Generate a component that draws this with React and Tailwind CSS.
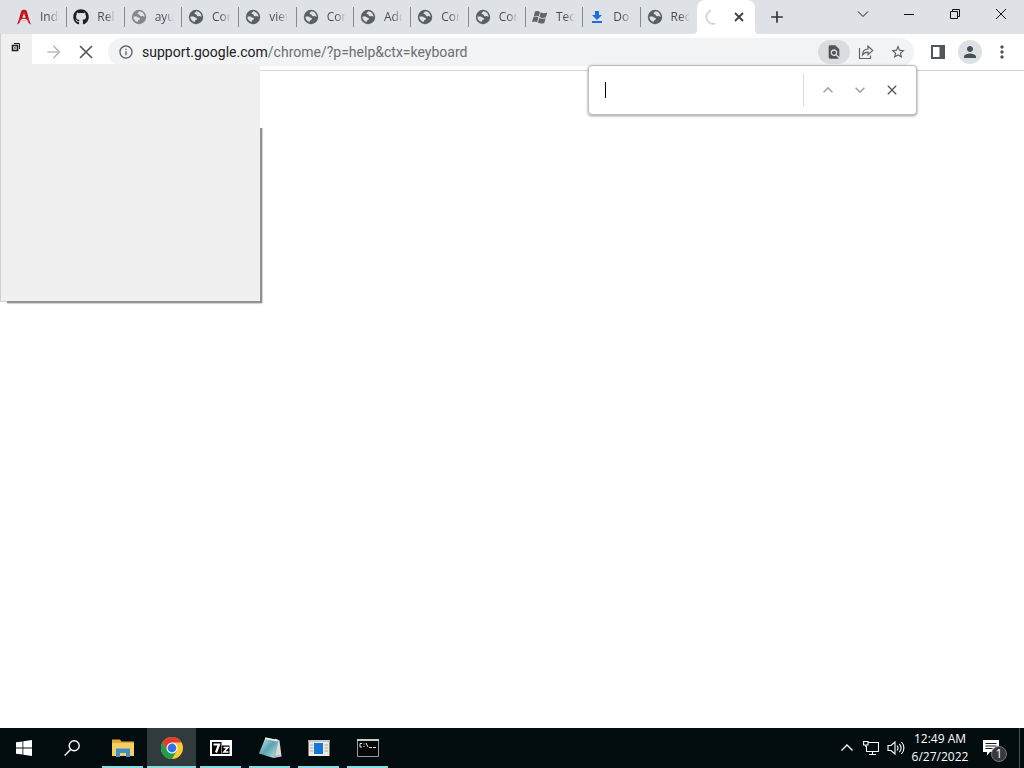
import React from 'react';
import {
  MdArrowForward, MdClose, MdOutlineInfo, MdFindInPage, MdStarBorder,
  MdPerson, MdMoreVert, MdKeyboardArrowUp, MdKeyboardArrowDown, MdAdd,
} from 'react-icons/md';
import { FaGithub } from 'react-icons/fa';

const Globe = ({ color = '#5a5f63' }) => (
  <svg viewBox="0 0 16 16" className="size-4" aria-hidden="true">
    <circle cx="8" cy="8" r="7.2" fill={color} />
    <path d="M2.300 7.800C3.800 7.600 5.600 7.400 6.800 8.200c.8.6 1.500.5 2 1 .6.7-.1 1.500-1 1.800-.9.300-.7 1.300-1.300 1.900C4 12.400 2.400 10.400 2.300 7.800Z" fill="#dee1e6" />
    <path d="M8.200 2.300c0 .9-1.700 1-1.700 2 0 .9 1.100.7 1.800 1.200.7.6.4 1.500 1.400 1.700 1 .2 1.300-.4 2.200-.2.700.2.800.9 1.600.9C13.400 4.900 11.400 2.400 8.200 2.300Z" fill="#dee1e6" />
  </svg>
);

const RedMark = () => (
  <svg viewBox="0 0 16 16" className="size-4" aria-hidden="true">
    <path d="M1 15.500C3.200 11 4 5 5.500 1.500 6.500.4 9.500.4 10.500 1.500 12 5 12.800 11 15 15.500 12.800 14.500 11.600 12.500 10.800 11.200H5.200C4.400 12.500 3.200 14.500 1 15.500Z" fill="#c4161c" />
    <path d="M8 4 6.300 8.800h3.400Z" fill="#dee1e6" />
    <path d="M3.300 12.400C5.500 8.800 10.500 8.800 12.700 12.400 10 10.400 6 10.400 3.300 12.400Z" fill="#fff" />
  </svg>
);

const WindowsFlag = () => (
  <svg viewBox="0 0 16 16" className="size-4" fill="#606368" aria-hidden="true">
    <path d="M3 2.600C4.800 1.700 6.400 2 8 2.900L6.700 7.600C5 6.700 3.500 6.500 1.700 7.400ZM8.700 3.300c1.800 1 3.800 1.200 6.600.2L13.900 8.300c-2.200.9-4.200.8-6.400-.3ZM1.400 8.200c1.700-.8 3.300-.8 5 .2L5.100 13.300C3.500 12.400 2 12.300 0 13.100ZM7.200 8.900c1.900 1 4.200 1.100 6.400.3L12.200 14c-2.200.9-4.400.6-6.300-.3Z" />
  </svg>
);

const Download = () => (
  <svg viewBox="0 0 16 16" className="size-4" fill="#1a6fe0" aria-hidden="true">
    <path d="M6 2h4v4h3l-5 5-5-5h3ZM3 12h10v2H3Z" />
  </svg>
);

const tabs = [
  ['Ind', <RedMark />],
  ['Rele', <FaGithub className="size-4 text-[#1c1f23]" />],
  ['ayu', <Globe color="#83878b" />],
  ['Con', <Globe />],
  ['view', <Globe />],
  ['Con', <Globe />],
  ['Add', <Globe />],
  ['Con', <Globe />],
  ['Con', <Globe />],
  ['Tec', <WindowsFlag />],
  ['Do', <Download />],
  ['Rec', <Globe />],
];

function TabStrip() {
  return (
    <div className="flex h-[34px] bg-[#dee1e6] pl-[9px]">
      <div className="flex min-w-0 max-w-[688px] flex-1" role="tablist">
        {tabs.map(([title, icon], i) => (
          <button key={i} role="tab" aria-selected="false" className="relative flex min-w-0 flex-1 items-center gap-2 pl-[7px]">
            <span className="shrink-0">{icon}</span>
            <span className="w-[18px] overflow-hidden bg-gradient-to-r from-[#45494d] from-50% to-[#45494d]/10 bg-clip-text text-left text-xs text-transparent">
              {title}
            </span>
            {i < 11 && <span className="absolute -right-px h-5 w-px bg-[#85898d]" />}
          </button>
        ))}
      </div>
      <div role="tab" aria-selected="true" className="relative flex w-[58px] items-center justify-between rounded-t-lg bg-white pr-2 pl-1.5">
        <svg viewBox="0 0 8 8" className="absolute bottom-0 -left-1 size-1" aria-hidden="true"><path d="M8 0v8H0C5 8 8 5 8 0Z" fill="#fff" /></svg>
        <svg viewBox="0 0 8 8" className="absolute -right-1 bottom-0 size-1" aria-hidden="true"><path d="M0 0v8h8C3 8 0 5 0 0Z" fill="#fff" /></svg>
        <svg viewBox="0 0 16 16" className="size-4" aria-hidden="true">
          <path d="M8 1.500A6.700 6.700 0 0 0 12.500 14.500" fill="none" stroke="#cdd3da" strokeWidth="1.800" />
        </svg>
        <button aria-label="Close tab" className="flex size-4 items-center justify-center">
          <svg viewBox="0 0 16 16" className="size-4" stroke="#3c4043" strokeWidth="1.800" aria-hidden="true"><path d="m4 4 8 8M12 4l-8 8" /></svg>
        </button>
      </div>
      <button aria-label="New tab" className="ml-3 flex w-5 items-center justify-center text-[#303438]">
        <MdAdd className="size-5" />
      </button>
      <div className="ml-auto flex h-7 text-[#111]">
        <button aria-label="Search tabs" className="flex w-[46px] items-center justify-center">
          <svg viewBox="0 0 12 12" className="size-3" fill="none" stroke="currentColor" aria-hidden="true"><path d="m1 3.500 5 5 5-5" /></svg>
        </button>
        <button aria-label="Minimize" className="flex w-[46px] items-center justify-center">
          <svg viewBox="0 0 12 12" className="size-3" fill="none" stroke="currentColor" aria-hidden="true"><path d="M1 6.500h10" /></svg>
        </button>
        <button aria-label="Restore" className="flex w-[46px] items-center justify-center">
          <svg viewBox="0 0 12 12" className="size-3" fill="none" stroke="currentColor" aria-hidden="true"><path d="M1.500 3.500h7v7h-7ZM3.500 3.500v-2h7v7h-2" /></svg>
        </button>
        <button aria-label="Close" className="flex w-[46px] items-center justify-center">
          <svg viewBox="0 0 12 12" className="size-3" fill="none" stroke="currentColor" aria-hidden="true"><path d="m1 1 10 10M11 1 1 11" /></svg>
        </button>
      </div>
    </div>
  );
}

function Toolbar() {
  return (
    <div className="border-b border-[#d6d7d9] bg-white">
      <div className="flex h-9 items-center pr-3">
        <div className="h-9 w-8 shrink-0 border-l border-[#d0d0d0] bg-[#f0f0f0] pt-2 pl-2.5">
          <svg viewBox="0 0 10 10" className="size-2.5" fill="none" stroke="#1c1c1c" aria-hidden="true">
            <path d="M1.500 3.500h5v5h-5Z" strokeWidth="1.600" />
            <path d="M3 1.500h5.500V7M3 6h2" />
          </svg>
        </div>
        <button aria-label="Forward" className="ml-3 flex size-5 items-center justify-center text-[#babcbe]"><MdArrowForward className="size-5" /></button>
        <button aria-label="Stop loading" className="ml-3 flex size-5 items-center justify-center text-[#54585c]">
          <svg viewBox="0 0 16 16" className="size-4" stroke="currentColor" strokeWidth="1.700" aria-hidden="true"><path d="m2 2 12 12M14 2 2 14" /></svg>
        </button>
        <div className="ml-3 flex h-7 min-w-0 flex-1 items-center rounded-full bg-[#f1f3f4] pr-1 pl-2.5">
          <button aria-label="Site information" className="text-[#5f6368]"><MdOutlineInfo className="size-4" /></button>
          <div className="relative ml-2 h-5 min-w-0 flex-1 font-[Roboto,'Open_Sans',sans-serif] text-sm leading-5">
            <input aria-label="Address" readOnly value="support.google.com/chrome/?p=help&ctx=keyboard" className="absolute inset-0 w-full bg-transparent text-transparent outline-none" />
            <span aria-hidden="true" className="pointer-events-none whitespace-nowrap text-[#6a6e72]"><span className="text-[#202124]">support.google.com</span>/chrome/?p=help&amp;ctx=keyboard</span>
          </div>
          <button aria-label="Find in page" className="mr-2 flex h-6 w-8 items-center justify-center rounded-full bg-[#dadce0] text-[#4f5458]"><MdFindInPage className="size-4" /></button>
          <button aria-label="Share this page" className="mr-4 text-[#5f6368]">
            <svg viewBox="0 0 16 16" className="size-4" fill="none" stroke="currentColor" strokeWidth="1.200" aria-hidden="true">
              <path d="M1.500 4v10.500h11V11.500M4.500 11C4.500 7.500 6.500 5.200 10 5V2.200l4.700 4.300-4.700 4.200V8.200C7.500 8.200 5.800 9 4.500 11Z" />
            </svg>
          </button>
          <button aria-label="Bookmark this page" className="mr-1 text-[#54585c]"><MdStarBorder className="size-4" /></button>
        </div>
        <div className="flex items-center pl-4">
          <button aria-label="Side panel">
            <svg viewBox="0 0 16 16" className="size-4" aria-hidden="true"><path d="M1 1h14v14H1Z" fill="#50565b" /><path d="M3 3h6.500v10H3Z" fill="#fff" /></svg>
          </button>
          <button aria-label="Profile" className="ml-3 flex size-6 items-center justify-center rounded-full bg-[#dde1e5] text-[#465058]"><MdPerson className="size-[18px]" /></button>
          <button aria-label="Menu" className="ml-2.5 text-[#50565b]"><MdMoreVert className="size-5" /></button>
        </div>
      </div>
    </div>
  );
}

function FindBar() {
  return (
    <form className="absolute top-[65px] right-[107px] z-30 flex h-[50px] w-[329px] items-center rounded border border-[#bdbdbd] bg-white shadow-[0_1px_3px_rgba(0,0,0,0.4)]" onSubmit={(e) => e.preventDefault()}>
      <div className="flex min-w-0 flex-1 items-center pl-4">
        <span className="h-4 w-px bg-black" />
        <input aria-label="Find in page" className="h-8 w-full min-w-0 bg-transparent text-xs outline-none" />
      </div>
      <span className="h-8 w-px bg-[#dadce0]" />
      <div className="flex gap-3 pr-3.5 pl-3.5 text-[#a1a3a6]">
        <button type="button" aria-label="Previous" className="size-5"><MdKeyboardArrowUp className="size-5" /></button>
        <button type="button" aria-label="Next" className="size-5"><MdKeyboardArrowDown className="size-5" /></button>
        <button type="button" aria-label="Close find bar" className="flex size-5 items-center justify-center text-[#54585c]">
          <MdClose className="size-4" />
        </button>
      </div>
    </form>
  );
}

const FolderIcon = () => (
  <svg viewBox="0 0 24 24" className="size-6" aria-hidden="true">
    <path d="M1 3.500h8l1.500 2H23V20H1Z" fill="#e0a93a" />
    <path d="M1 7h22v13H1Z" fill="#f6d05f" />
    <path d="M5 12.500h14V21h-4v-4H9v4H5Z" fill="#3f8fcb" />
  </svg>
);

const ChromeIcon = () => (
  <svg viewBox="0 0 24 24" className="size-6" aria-hidden="true">
    <circle cx="12" cy="12" r="11" fill="#fcc934" />
    <path d="M2.470 6.500A11 11 0 0 1 21.530 6.500H12L7.240 14.750Z" fill="#e33b2e" />
    <path d="M2.470 6.500A11 11 0 0 0 12 23L16.760 14.750H7.240Z" fill="#1e9c4b" />
    <circle cx="12" cy="12" r="5.500" fill="#fff" />
    <circle cx="12" cy="12" r="4.400" fill="#2f73e6" />
  </svg>
);

const SevenZipIcon = () => (
  <svg viewBox="0 0 24 24" className="size-6" aria-hidden="true">
    <path d="M1 4h22v16H1Z" fill="#fff" />
    <path d="M3 6h9.500v12H3Z" fill="#000" />
    <path d="M4.500 8.500H10L7 16.500" fill="none" stroke="#fff" strokeWidth="2.200" />
    <path d="M13 9.500h7.500v8.500H13Z" fill="#000" />
    <path d="M14.500 11.500h4.200l-3.700 4.500h4.500" fill="none" stroke="#fff" strokeWidth="1.700" />
  </svg>
);

const NotepadIcon = () => (
  <svg viewBox="0 0 24 24" className="size-6" aria-hidden="true">
    <defs><linearGradient id="pad" x1="0" y1="0" x2="1" y2="1"><stop offset="0" stopColor="#d5eef2" /><stop offset=".5" stopColor="#5aa3b0" /><stop offset="1" stopColor="#c2e6ea" /></linearGradient></defs>
    <path d="M17 2.500 21.500 4.500 23.500 20.500 15.500 22Z" fill="#d5dcdc" />
    <path d="M7.500 1.500 20 4 15.500 22 1 17.500Z" fill="url(#pad)" />
    <path d="M7.500 1.500 20 4l-.4 1.600L7 3Z" fill="#edf3e6" />
    <path d="m20 5-3.500 15.500 5-1" fill="none" stroke="#829396" strokeWidth=".7" />
  </svg>
);

const PanelIcon = () => (
  <svg viewBox="0 0 24 24" className="size-6" aria-hidden="true">
    <path d="M1.500 4h21v16h-21Z" fill="#eee9e1" />
    <path d="M1.500 4h21v2h-21Z" fill="#bfc9cf" />
    <path d="M7 7h9v11H7Z" fill="#1378d8" />
    <path d="M3 9h3M3 12h3M3 15h3M17.500 9h3.500M17.500 12h3.500M17.500 15h3.500" stroke="#a9aaa7" />
  </svg>
);

const ConsoleIcon = () => (
  <svg viewBox="0 0 24 24" className="size-6" aria-hidden="true">
    <path d="M1.500 3.500h21v17h-21Z" fill="#080808" stroke="#9c9f9f" />
    <path d="M1 3h22v2H1Z" fill="#c9cccc" />
    <path d="M6 7.500H4v3.500h2M8 7.500v1M8 10v1M10 7l2 4M13 11.500h3M17 11.500h3" fill="none" stroke="#e5e5e5" />
  </svg>
);

const apps = [
  ['File Explorer', <FolderIcon />],
  ['Google Chrome', <ChromeIcon />],
  ['7-Zip', <SevenZipIcon />],
  ['Notepad', <NotepadIcon />],
  ['Programs', <PanelIcon />],
  ['Command Prompt', <ConsoleIcon />],
];

function Taskbar() {
  return (
    <footer className="flex h-10 bg-[#030c0e] text-white">
      <button aria-label="Start" className="flex w-12 items-center justify-center">
        <svg viewBox="0 0 16 16" className="size-4" fill="#fff" aria-hidden="true"><path d="M0 2.300 6.500 1.400V7.500H0ZM7.300 1.300 16 0v7.500H7.300ZM0 8.400h6.500v6.200L0 13.700ZM7.300 8.400H16V16l-8.700-1.200Z" /></svg>
      </button>
      <button aria-label="Search" className="flex w-12 items-center justify-center">
        <svg viewBox="0 0 16 16" className="size-4" fill="none" stroke="#fff" strokeWidth="1.400" aria-hidden="true"><circle cx="10.200" cy="5.800" r="5" /><path d="M6.600 9.400.6 15.400" /></svg>
      </button>
      <nav className="ml-0.5 flex" aria-label="Running apps">
        {apps.map(([name, icon], i) => (
          <button key={name} aria-label={name} className={`relative flex w-[49px] items-center justify-center ${i === 1 ? 'bg-[#313b3c]' : ''}`}>
            {icon}
            <span className={`absolute bottom-0 h-0.5 bg-[#86dce0] ${i === 1 ? 'inset-x-0' : 'inset-x-1'}`} />
          </button>
        ))}
      </nav>
      <div className="ml-auto flex items-center">
        <button aria-label="Show hidden icons" className="mr-2">
          <svg viewBox="0 0 16 16" className="size-4" fill="none" stroke="#fff" strokeWidth="1.400" aria-hidden="true"><path d="m2.500 10.500 5.500-5.500 5.500 5.500" /></svg>
        </button>
        <button aria-label="Network" className="mr-2">
          <svg viewBox="0 0 16 16" className="size-4" fill="none" stroke="#fff" strokeWidth="1.100" aria-hidden="true"><path d="M5.500 2.500h10v9H3.500V6.500M9.500 11.500v3M6 14.500h7M.6 1.500h4.400V5H.6ZM2.800 5v1.500h1" /></svg>
        </button>
        <button aria-label="Volume" className="mr-2">
          <svg viewBox="0 0 18 16" className="h-4 w-[18px]" fill="none" stroke="#fff" strokeWidth="1.100" aria-hidden="true"><path d="M1 5.500h3L8 2v12l-4-3.500H1ZM10 5.500c1.300 1.500 1.300 3.500 0 5M12.300 3.800c2.200 2.500 2.200 5.900 0 8.400M14.500 2c3.200 3.500 3.200 8.500 0 12" /></svg>
        </button>
        <time className="flex w-[54px] flex-col items-center text-xs leading-[18px] whitespace-nowrap">
          <span>12:49 AM</span>
          <span>6/27/2022</span>
        </time>
        <button aria-label="Notifications" className="relative mr-5 ml-4 size-4">
          <svg viewBox="0 0 16 16" className="size-4" aria-hidden="true"><path d="M0 0h16v12H7l-3 3.500V12H0Z" fill="#fff" /><path d="M2.500 3.500h11M2.500 6h11M2.500 8.500h7" stroke="#162022" /></svg>
          <span className="absolute top-1.5 left-2 flex size-4 items-center justify-center rounded-full border border-[#777] bg-[#353b3c] text-xs leading-none">1</span>
        </button>
        <span className="mr-1 h-10 w-px bg-[#4b5354]" />
      </div>
    </footer>
  );
}

export default function App() {
  return (
    <div className="relative flex min-h-screen flex-col bg-white font-['Open_Sans','Noto_Sans',sans-serif]">
      <header>
        <TabStrip />
        <Toolbar />
      </header>
      <FindBar />
      <main className="relative flex-1">
        <div className="absolute -top-[7px] left-0 z-10 h-[238px] w-[260px] border-b border-l border-[#d0d0d0] bg-[#f0f0f0]">
          <span className="absolute top-16 -right-0.5 -bottom-0.5 w-0.5 bg-[#929292] shadow-[1px_0_1px_#d0d0d0]" />
          <span className="absolute -right-0.5 -bottom-0.5 left-1.5 h-0.5 bg-[#929292] shadow-[0_1px_1px_#d0d0d0]" />
        </div>
      </main>
      <Taskbar />
    </div>
  );
}
